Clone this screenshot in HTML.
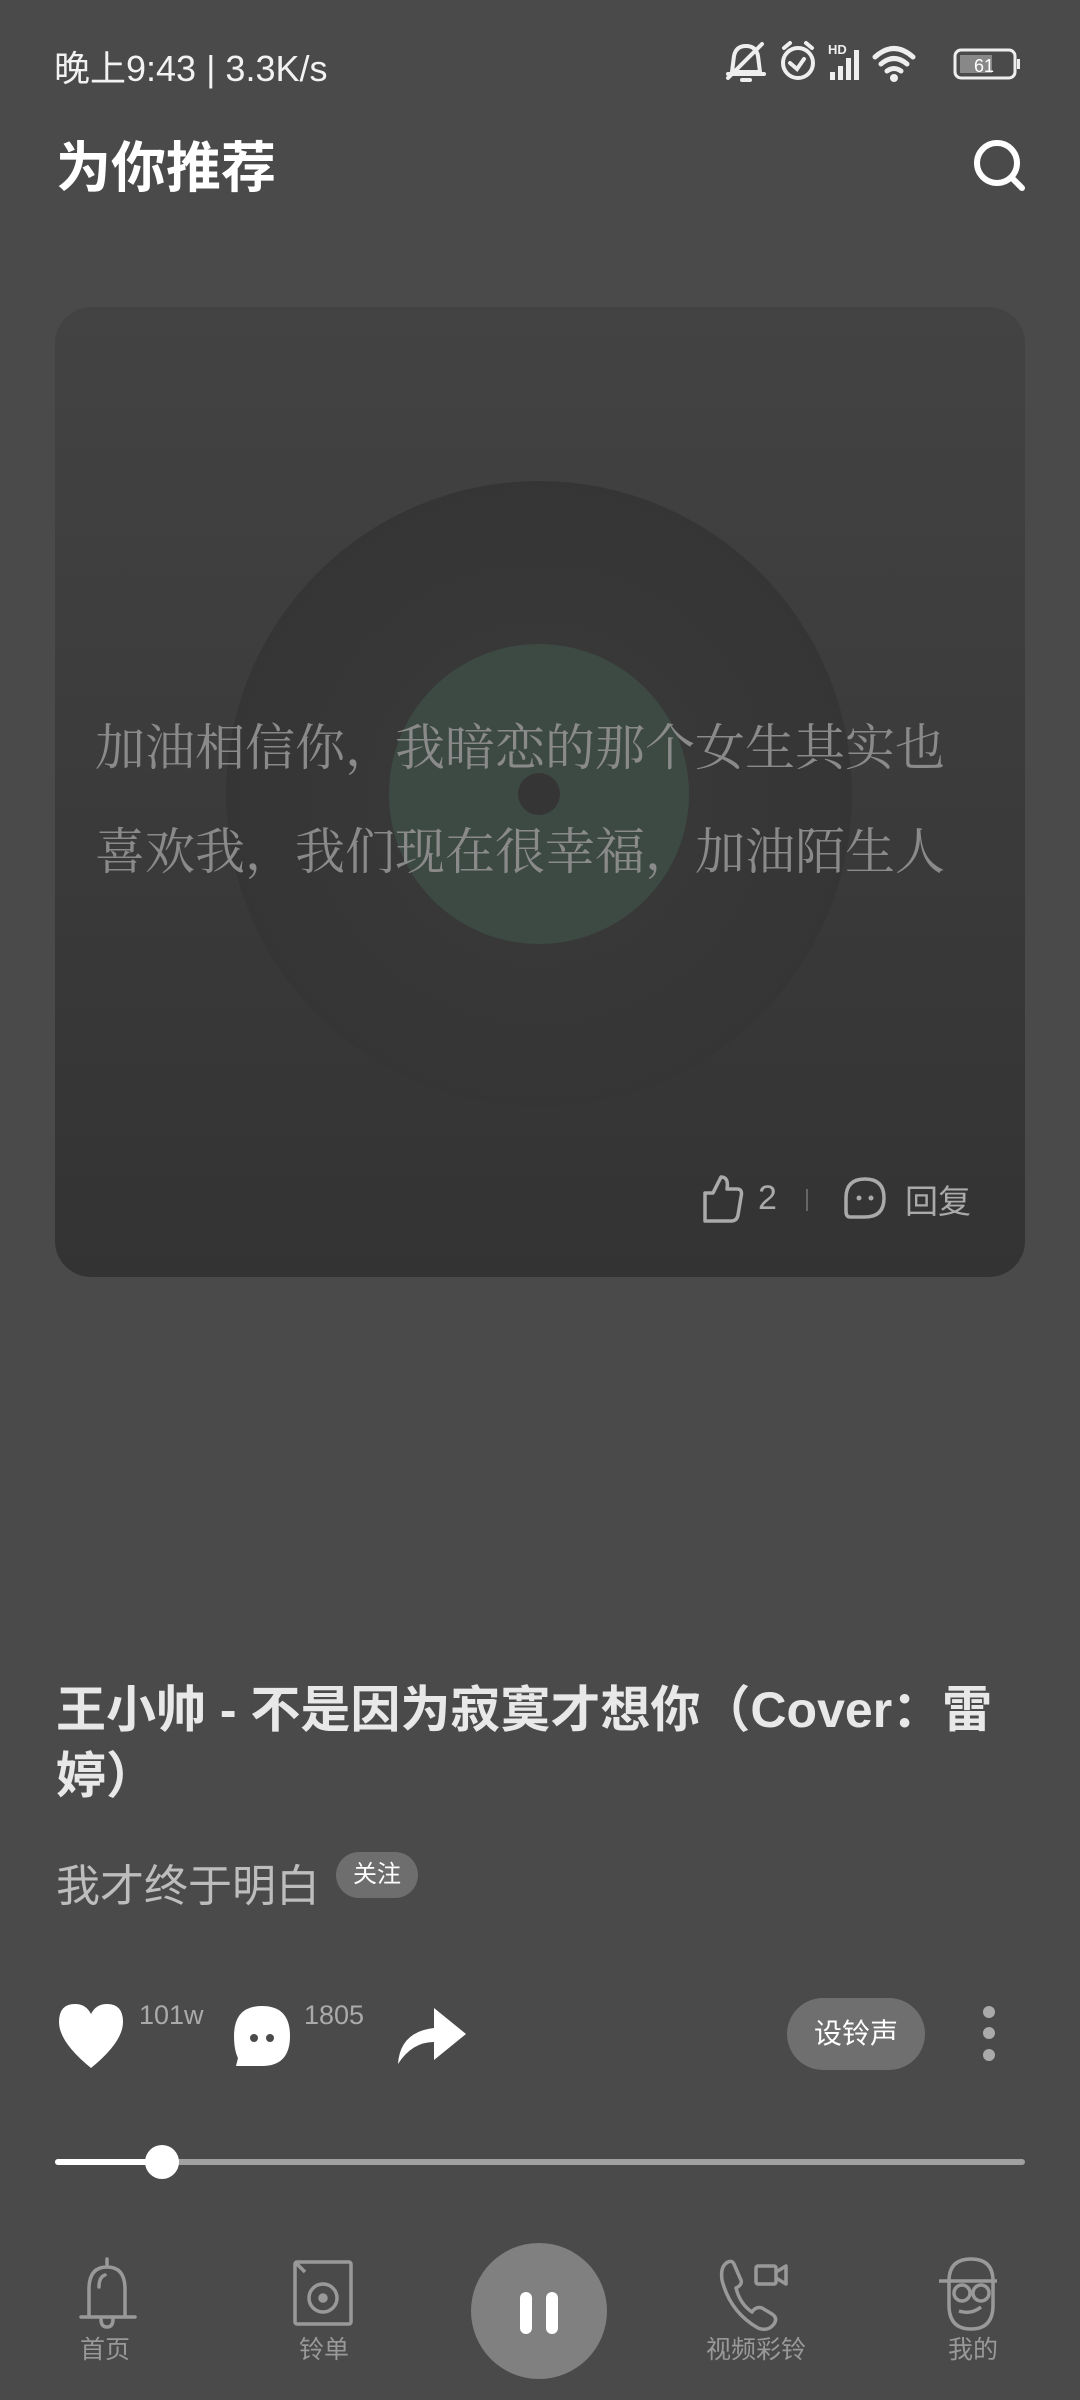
<!DOCTYPE html>
<html><head><meta charset="utf-8"><style>
*{margin:0;padding:0;box-sizing:border-box}
body{width:1080px;height:2400px;background:#4a4a4a;font-family:"Liberation Sans","Noto Sans CJK SC",sans-serif;position:relative;overflow:hidden;color:#fff}
.a{position:absolute}
</style></head><body>
<div class="a" style="left:54px;top:40px;font-size:36px;color:#f2f2f2;white-space:nowrap">晚上9:43 | 3.3K/s</div>
<svg class="a" style="left:720px;top:38px" width="310" height="50" viewBox="0 0 310 50">
<g fill="none" stroke="#eee" stroke-width="4" stroke-linecap="round">
<path d="M12 34 L14 18 Q16 8 26 8 Q36 8 38 18 L40 34 Z M8 36 H44 M22 42 H30 M8 40 L42 6"/>
<circle cx="78" cy="25" r="15"/><path d="M70 25 L77 31 L84 21 M64 10 L70 5 M92 10 L86 5"/>
</g>
<text x="108" y="16" font-size="13" fill="#eee" font-family="Liberation Sans" font-weight="bold">HD</text>
<g fill="#eee"><rect x="110" y="34" width="5" height="8"/><rect x="118" y="28" width="5" height="14"/><rect x="126" y="20" width="5" height="22"/><rect x="134" y="12" width="5" height="30"/></g>
<g fill="none" stroke="#eee" stroke-width="5" stroke-linecap="round"><path d="M155 19 Q174 2 193 19 M161 26 Q174 15 187 26 M167 33 Q174 28 181 33"/></g><circle cx="174" cy="40" r="4" fill="#eee"/>
<rect x="235" y="12" width="60" height="28" rx="6" fill="none" stroke="#eee" stroke-width="3"/><rect x="240" y="17" width="32" height="18" fill="#888"/><rect x="297" y="21" width="3" height="10" fill="#eee"/>
<text x="254" y="34" font-size="18" fill="#fff" font-family="Liberation Sans">61</text>
</svg>
<div class="a" style="left:56px;top:123px;font-size:55px;font-weight:bold;color:#fff">为你推荐</div>
<svg class="a" style="left:970px;top:136px" width="60" height="60" viewBox="0 0 60 60"><circle cx="27" cy="27" r="20" fill="none" stroke="#fff" stroke-width="6"/><path d="M42 42 L52 52" stroke="#fff" stroke-width="6" stroke-linecap="round"/></svg>

<div class="a" style="left:55px;top:307px;width:970px;height:970px;border-radius:36px;background:linear-gradient(#434343,#333);overflow:hidden">
<div class="a" style="left:171px;top:174px;width:626px;height:626px;border-radius:50%;background:radial-gradient(circle,#3a3a3a 0,#363636 60%,#333 100%)"></div>
<div class="a" style="left:334px;top:337px;width:300px;height:300px;border-radius:50%;background:#3d4a44"></div>
<div class="a" style="left:463px;top:466px;width:42px;height:42px;border-radius:50%;background:#353535"></div>
<div class="a" style="left:40px;top:389px;width:862px;font-family:'Liberation Serif','Noto Serif CJK SC',serif;font-size:50px;line-height:104px;color:#8a8a8a">加油相信你，我暗恋的那个女生其实也喜欢我，我们现在很幸福，加油陌生人</div>
<svg class="a" style="left:640px;top:862px" width="60" height="60" viewBox="0 0 60 60"><path d="M10 24 H18 L26 8 Q34 8 32 20 H42 Q48 20 46 28 L43 46 Q42 52 36 52 H10 Z" fill="none" stroke="#aaa" stroke-width="3.5" stroke-linejoin="round"/></svg>
<div class="a" style="left:703px;top:872px;font-size:34px;color:#aaa">2</div>
<div class="a" style="left:751px;top:882px;width:2px;height:22px;background:#666"></div>
<svg class="a" style="left:785px;top:866px" width="50" height="50" viewBox="0 0 50 50"><path d="M25 6 Q44 6 44 25 Q44 44 25 44 H10 Q6 44 6 38 V25 Q6 6 25 6 Z" fill="none" stroke="#aaa" stroke-width="3.5"/><circle cx="19" cy="25" r="2.5" fill="#aaa"/><circle cx="31" cy="25" r="2.5" fill="#aaa"/></svg>
<div class="a" style="left:850px;top:868px;font-size:33px;color:#aaa">回复</div>
</div>

<div class="a" style="left:56px;top:1677px;width:980px;font-size:50px;line-height:66px;font-weight:bold;color:#e8e8e8">王小帅 - 不是因为寂寞才想你（Cover：雷婷）</div>
<div class="a" style="left:56px;top:1850px;font-size:44px;color:#bdbdbd">我才终于明白</div>
<div class="a" style="left:336px;top:1852px;width:82px;height:46px;border-radius:23px;background:#6e6e6e;font-size:24px;line-height:46px;text-align:center;color:#fff">关注</div>

<svg class="a" style="left:55px;top:2002px" width="72" height="70" viewBox="0 0 72 70"><path d="M36 66 Q4 40 4 20 Q4 2 20 2 Q31 2 36 12 Q41 2 52 2 Q68 2 68 20 Q68 40 36 66 Z" fill="#fff"/></svg>
<div class="a" style="left:139px;top:2000px;font-size:27px;color:#aaa">101w</div>
<svg class="a" style="left:230px;top:2004px" width="64" height="66" viewBox="0 0 64 66"><path d="M32 2 Q60 2 60 32 Q60 62 32 62 H6 L8 54 Q4 46 4 32 Q4 2 32 2 Z" fill="#fff"/><circle cx="24" cy="34" r="4" fill="#4a4a4a"/><circle cx="40" cy="34" r="4" fill="#4a4a4a"/></svg>
<div class="a" style="left:304px;top:2000px;font-size:27px;color:#aaa">1805</div>
<svg class="a" style="left:396px;top:2002px" width="72" height="64" viewBox="0 0 72 64"><path d="M2 62 Q4 30 38 26 V6 L70 32 L38 58 V40 Q16 40 2 62 Z" fill="#fff"/></svg>
<div class="a" style="left:787px;top:1998px;width:138px;height:72px;border-radius:36px;background:#6f6f6f;font-size:28px;line-height:72px;text-align:center;color:#fff">设铃声</div>
<div class="a" style="left:983px;top:2006px;width:12px;height:12px;border-radius:50%;background:#aaa"></div>
<div class="a" style="left:983px;top:2027px;width:12px;height:12px;border-radius:50%;background:#aaa"></div>
<div class="a" style="left:983px;top:2049px;width:12px;height:12px;border-radius:50%;background:#aaa"></div>

<div class="a" style="left:55px;top:2159px;width:970px;height:6px;border-radius:3px;background:#a0a0a0"></div>
<div class="a" style="left:55px;top:2159px;width:108px;height:6px;border-radius:3px;background:#fff"></div>
<div class="a" style="left:145px;top:2145px;width:34px;height:34px;border-radius:50%;background:#fff"></div>

<svg class="a" style="left:75px;top:2255px" width="70" height="80" viewBox="0 0 70 80"><g fill="none" stroke="#999" stroke-width="3.5" stroke-linecap="round"><path d="M32 4 V10 M14 62 V34 Q14 12 32 12 Q50 12 50 34 V62 M6 62 H60 M26 64 Q26 72 32 72 Q38 72 38 64 M30 20 Q24 22 24 32"/></g></svg>
<div class="a" style="left:80px;top:2330px;font-size:25px;color:#999">首页</div>
<svg class="a" style="left:290px;top:2258px" width="66" height="74" viewBox="0 0 66 74"><g fill="none" stroke="#999" stroke-width="3.5"><rect x="5" y="4" width="56" height="62" rx="2"/><circle cx="33" cy="40" r="14"/><circle cx="33" cy="40" r="3" fill="#999"/><path d="M5 4 L15 14"/></g></svg>
<div class="a" style="left:299px;top:2330px;font-size:25px;color:#999">铃单</div>
<div class="a" style="left:471px;top:2243px;width:136px;height:136px;border-radius:50%;background:#808080"></div>
<div class="a" style="left:520px;top:2292px;width:12px;height:42px;border-radius:6px;background:#fff"></div>
<div class="a" style="left:546px;top:2292px;width:12px;height:42px;border-radius:6px;background:#fff"></div>
<svg class="a" style="left:718px;top:2258px" width="74" height="76" viewBox="0 0 74 76"><g fill="none" stroke="#999" stroke-width="3.5" stroke-linejoin="round"><path d="M10 4 Q2 8 4 22 Q12 54 40 70 Q50 74 56 66 Q60 60 54 56 L44 50 Q38 48 34 54 Q22 46 18 30 Q26 26 22 20 L16 6 Q14 2 10 4 Z"/><rect x="38" y="8" width="20" height="18" rx="2"/><path d="M58 14 L68 8 V26 L58 20"/></g></svg>
<div class="a" style="left:706px;top:2330px;font-size:25px;color:#999">视频彩铃</div>
<svg class="a" style="left:935px;top:2255px" width="72" height="80" viewBox="0 0 72 80"><g fill="none" stroke="#999" stroke-width="3.5"><path d="M14 26 Q14 4 36 4 Q58 4 58 26 V50 Q58 74 36 74 Q14 74 14 50 Z M4 26 H62"/><circle cx="27" cy="38" r="8"/><circle cx="46" cy="38" r="8"/><path d="M35 38 H38 M24 56 Q36 60 46 52"/></g></svg>
<div class="a" style="left:948px;top:2330px;font-size:25px;color:#999">我的</div>
</body></html>
